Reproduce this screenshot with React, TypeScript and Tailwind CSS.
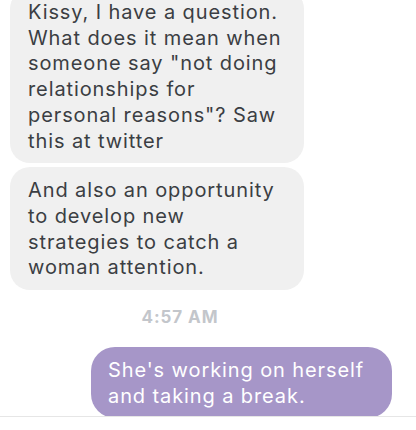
import React from 'react';

const font = { fontFamily: 'Inter, "Liberation Sans", Arial, sans-serif' };

function Incoming({ text }: { text: string }) {
  return (
    <div className="w-[294px] ml-[10px] rounded-[20px] bg-[#f0f0f0] pl-[18px] pr-[18px] pt-[11px] pb-[9px] text-[20px] leading-[25.7px] tracking-[0.9px] text-[#3b3e43]">
      {text}
    </div>
  );
}

export default function App() {
  return (
    <div className="flex h-[430px] w-[416px] flex-col overflow-hidden bg-white" style={font}>
      {/* Messages */}
      <div className="flex-1 overflow-hidden">
        <div className="-mt-[11px] flex flex-col gap-[4px]">
          <Incoming text={'Kissy, I have a question. What does it mean when someone say "not doing relationships for personal reasons"? Saw this at twitter'} />
          <Incoming text="And also an opportunity to develop new strategies to catch a woman attention." />
        </div>

        <div className="mt-[17px] w-[360px] text-center text-[17px] font-bold leading-[20px] tracking-[0.9px] text-[#c3c6cb]">
          4:57 AM
        </div>

        <div className="mt-[20px] flex justify-end pr-[24px]">
          <div className="w-[301px] rounded-[24px] bg-[#a696c8] pl-[17px] pr-[12px] pt-[11px] pb-[9px] text-[20px] leading-[25.7px] tracking-[0.9px] text-white">
            She's working on herself and taking a break.
          </div>
        </div>
      </div>

      {/* Composer edge */}
      <div className="h-[14px] shrink-0 border-t border-[#e6e6e6] bg-white" />
    </div>
  );
}
